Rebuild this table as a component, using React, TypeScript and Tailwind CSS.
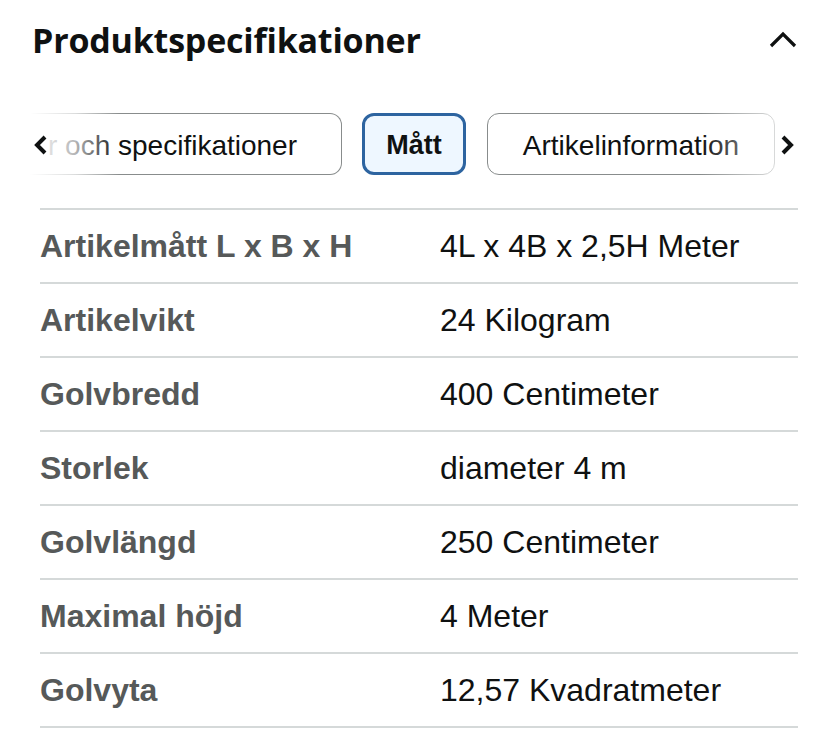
import React from "react";

const rows: [string, string][] = [
  ["Artikelmått L x B x H", "4L x 4B x 2,5H Meter"],
  ["Artikelvikt", "24 Kilogram"],
  ["Golvbredd", "400 Centimeter"],
  ["Storlek", "diameter 4 m"],
  ["Golvlängd", "250 Centimeter"],
  ["Maximal höjd", "4 Meter"],
  ["Golvyta", "12,57 Kvadratmeter"],
];

function Chevron({ dir }: { dir: "left" | "right" | "up" }) {
  if (dir === "up") {
    return (
      <svg width="30" height="20" viewBox="0 0 30 20">
        <path d="M3 16 L15 4 L27 16" fill="none" stroke="#0f1111" strokeWidth="3.2" />
      </svg>
    );
  }
  const d = dir === "left" ? "M11 2 L3 10 L11 18" : "M3 2 L11 10 L3 18";
  return (
    <svg width="15" height="20" viewBox="0 0 15 20">
      <path d={d} fill="none" stroke="#0f1111" strokeWidth="4" strokeLinejoin="miter" />
    </svg>
  );
}

export default function App() {
  return (
    <div className="w-[827px] h-[748px] bg-white overflow-hidden" style={{ fontFamily: '"Liberation Sans", Arial, sans-serif' }}>
      <div className="flex items-center justify-between pl-[32px] pr-[29px] pt-[20px] h-[40px] box-content">
        <h2
          className="text-[34px] font-bold text-[#0f1111] leading-[40px] tracking-[-0.2px]"
          style={{ fontFamily: '"Open Sans", sans-serif' }}
        >
          Produktspecifikationer
        </h2>
        <Chevron dir="up" />
      </div>

      <div className="relative mt-[53px] ml-[30px] w-[770px] h-[62px] overflow-hidden">
        <div className="flex gap-[20px] h-full">
          <div className="w-[312px] shrink-0 h-full pt-[3px] border-[1.5px] border-l-0 border-[#888c8c] rounded-r-[12px] flex items-center justify-end pr-[44px] text-[28px] text-[#0f1111]">
            r och specifikationer
          </div>
          <div className="w-[104px] shrink-0 h-full pt-[3px] border-[3.5px] border-[#2d64a0] rounded-[12px] bg-[#eef7ff] flex items-center justify-center text-[27px] font-bold text-[#0f1111]">
            Mått
          </div>
          <div className="w-[288px] shrink-0 h-full pt-[3px] ml-[1px] border-[1.5px] border-[#888c8c] rounded-[12px] flex items-center justify-center text-[28px] text-[#0f1111]">
            Artikelinformation
          </div>
        </div>
        <div className="absolute left-0 top-0 h-full w-[90px] bg-gradient-to-r from-white via-white/70 to-transparent" />
        <div className="absolute left-[670px] top-0 h-full w-[100px] bg-gradient-to-r from-transparent to-white/90" />
        <div className="absolute left-[4px] top-[22px]">
          <Chevron dir="left" />
        </div>
        <div className="absolute left-[750px] top-[22px]">
          <Chevron dir="right" />
        </div>
      </div>

      <div className="mt-[33px] ml-[40px] w-[758px] border-b-2 border-[#d5d9d9]">
        {rows.map(([k, v]) => (
          <div key={k} className="flex items-center h-[74px] border-t-2 border-[#d5d9d9]">
            <div className="w-[400px] text-[32px] font-bold text-[#565959]">{k}</div>
            <div className="text-[32px] text-[#0f1111]">{v}</div>
          </div>
        ))}
      </div>
    </div>
  );
}
